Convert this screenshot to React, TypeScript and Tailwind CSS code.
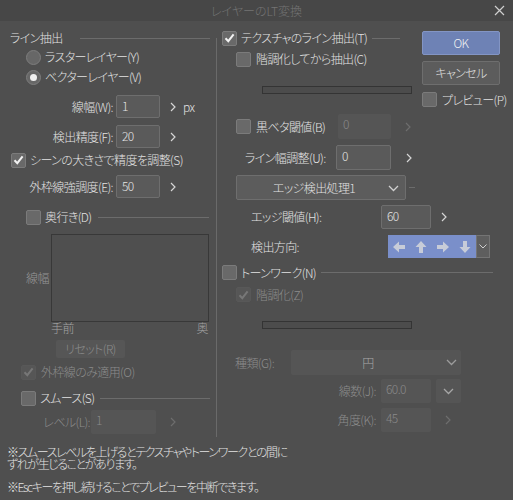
import React from "react";

const font = "font-['Noto_Sans_CJK_JP',sans-serif] [font-feature-settings:'palt']";

function Check({ checked = false, disabled = false }: { checked?: boolean; disabled?: boolean }) {
  return (
    <span
      className={`flex h-[15px] w-[15px] shrink-0 items-center justify-center rounded-[2px] border ${
        disabled ? "border-[#585858] bg-[#565656]" : "border-[#7b7b7b] bg-[#696969]"
      }`}
    >
      {checked && (
        <svg width="11" height="10" viewBox="0 0 11 10">
          <path d="M1.5 5.2 L4.3 8.2 L9.6 1.4" fill="none" stroke={disabled ? "#777" : "#f2f2f2"} strokeWidth="2" />
        </svg>
      )}
    </span>
  );
}

function Radio({ on = false }: { on?: boolean }) {
  return (
    <span className="flex h-[15px] w-[15px] shrink-0 items-center justify-center rounded-full border border-[#7d7d7d] bg-[#676767]">
      {on && <span className="h-[7px] w-[7px] rounded-full bg-[#f0f0f0]" />}
    </span>
  );
}

function Chevron({ dim = false }: { dim?: boolean }) {
  return (
    <svg width="6" height="10" viewBox="0 0 6 10" className="shrink-0">
      <path d="M1 1 L5 5 L1 9" fill="none" stroke={dim ? "#6e6e6e" : "#d6d6d6"} strokeWidth="1.2" />
    </svg>
  );
}

function Down({ color = "#d0d0d0" }: { color?: string }) {
  return (
    <svg width="11" height="7" viewBox="0 0 11 7">
      <path d="M1 1 L5.5 5.5 L10 1" fill="none" stroke={color} strokeWidth="1.3" />
    </svg>
  );
}

function Field({ value, className, disabled = false }: { value: string; className: string; disabled?: boolean }) {
  return (
    <span
      className={`flex shrink-0 items-start rounded-[2px] pl-[5px] pt-[2px] text-[12px] leading-[16px] ${
        disabled ? "bg-[#555555] text-[#8a8a8a]" : "border border-[#6e6e6e] bg-[#5a5a5a] text-[#e4e4e4]"
      } ${className}`}
    >
      {value}
    </span>
  );
}

function DirArrow({ rot }: { rot: string }) {
  return (
    <span className="flex w-[22px] items-center justify-center">
      <svg width="12" height="12" viewBox="0 0 12 12" className={rot}>
        <polygon points="0,6 6,0.5 6,4 12,4 12,8 6,8 6,11.5" fill="#c7ccd8" />
      </svg>
    </span>
  );
}

export default function App() {
  return (
    <div className={`flex h-[500px] w-[513px] flex-col overflow-hidden bg-[#4f4f4f] text-[12px] font-light leading-[16px] text-[#e2e2e2] ${font}`}>
      {/* title */}
      <div className="relative flex h-[21px] shrink-0 items-center justify-center bg-[#474747] text-[#747474]">
        <span>レイヤーのLT変換</span>
        <svg width="11" height="11" viewBox="0 0 11 11" className="absolute right-[8px] top-[5px]">
          <path d="M1 1 L10 10 M10 1 L1 10" stroke="#cfcfcf" strokeWidth="1.2" />
        </svg>
      </div>

      <div className="flex h-[419px] shrink-0 tracking-[-0.6px]">
        {/* left column */}
        <div className="flex w-[216px] shrink-0 flex-col">
          <div className="mt-[9px] flex h-[16px] items-center pl-[10px] pr-[6px]">
            <span>ライン抽出</span>
            <span className="ml-[17px] h-px flex-1 bg-[#6c6c6c]" />
          </div>
          <div className="mt-[3px] flex h-[16px] items-center gap-[4px] pl-[26px]">
            <Radio />
            <span>ラスターレイヤー(Y)</span>
          </div>
          <div className="mt-[4px] flex h-[16px] items-center gap-[4px] pl-[26px]">
            <Radio on />
            <span>ベクターレイヤー(V)</span>
          </div>
          <div className="mt-[10px] flex h-[23px] items-center">
            <span className="w-[113px] text-right">線幅(W):</span>
            <Field value="1" className="ml-[3px] h-[23px] w-[44px]" />
            <span className="ml-[10px]"><Chevron /></span>
            <span className="ml-[7px]">px</span>
          </div>
          <div className="mt-[7px] flex h-[23px] items-center">
            <span className="w-[113px] text-right">検出精度(F):</span>
            <Field value="20" className="ml-[3px] h-[23px] w-[44px]" />
            <span className="ml-[10px]"><Chevron /></span>
          </div>
          <div className="mt-[4px] flex h-[16px] items-center gap-[4px] pl-[11px]">
            <Check checked />
            <span>シーンの大きさで精度を調整(S)</span>
          </div>
          <div className="mt-[7px] flex h-[23px] items-center">
            <span className="w-[113px] text-right">外枠線強調度(E):</span>
            <Field value="50" className="ml-[3px] h-[23px] w-[44px]" />
            <span className="ml-[10px]"><Chevron /></span>
          </div>
          <div className="mt-[11px] flex h-[16px] items-center pl-[26px] pr-[7px]">
            <Check />
            <span className="ml-[4px]">奥行き(D)</span>
            <span className="ml-[6px] h-px flex-1 bg-[#6c6c6c]" />
          </div>
          <div className="mt-[9px] flex h-[88px]">
            <span className="w-[51px] self-center pl-[26px] text-[#979797]">線幅</span>
            <div className="h-[88px] w-[158px] border border-[#383838]" />
          </div>
          <div className="flex h-[12px] w-[208px] items-center justify-between pl-[51px] leading-[12px] text-[#a2a2a2]">
            <span>手前</span>
            <span>奥</span>
          </div>
          <div className="ml-[56px] mt-[6px] flex h-[18px] w-[69px] items-center justify-center rounded-[2px] bg-[#565656] text-[#8c8c8c]">
            リセット(R)
          </div>
          <div className="mt-[6px] flex h-[16px] items-center pl-[21px]">
            <Check checked disabled />
            <span className="ml-[5px] text-[#8c8c8c]">外枠線のみ適用(O)</span>
          </div>
          <div className="mt-[10px] flex h-[16px] items-center pl-[21px] pr-[6px]">
            <Check />
            <span className="ml-[4px]">スムース(S)</span>
            <span className="ml-[6px] h-px flex-1 bg-[#6c6c6c]" />
          </div>
          <div className="mt-[4px] flex h-[24px] items-center">
            <span className="w-[90px] text-right text-[#8c8c8c]">レベル(L):</span>
            <Field value="1" disabled className="ml-[1px] h-[24px] w-[65px]" />
            <span className="ml-[14px]"><Chevron dim /></span>
          </div>
        </div>

        {/* separator */}
        <div className="mt-[17px] h-[399px] w-px shrink-0 bg-[#6a6a6a]" />

        {/* right column */}
        <div className="flex flex-1 flex-col">
          <div className="flex">
            <div className="flex w-[195px] flex-col">
              <div className="mt-[9px] flex h-[16px] items-center pl-[5px] pr-[12px]">
                <Check checked />
                <span className="ml-[4px] whitespace-nowrap">テクスチャのライン抽出(T)</span>
                <span className="ml-[5px] h-px flex-1 bg-[#6c6c6c]" />
              </div>
              <div className="mt-[5px] flex h-[16px] items-center pl-[19px]">
                <Check />
                <span className="ml-[5px]">階調化してから抽出(C)</span>
              </div>
              <div className="ml-[45px] mt-[19px] h-[8px] w-[150px] border border-[#343434] bg-[#4c4c4c]" />
            </div>
            <div className="ml-[10px] flex w-[78px] flex-col">
              <div className="mt-[10px] flex h-[24px] items-center justify-center rounded-[2px] border border-[#8395c4] bg-[#6e82b5] text-[#f2f2f2]">
                OK
              </div>
              <div className="mt-[6px] flex h-[24px] items-center justify-center rounded-[2px] border border-[#6e6e6e] bg-[#5c5c5c]">
                キャンセル
              </div>
              <div className="mt-[7px] flex h-[15px] items-center whitespace-nowrap">
                <Check />
                <span className="ml-[5px]">プレビュー(P)</span>
              </div>
            </div>
          </div>

          <div className="mt-[7px] flex h-[25px] items-center">
            <div className="flex w-[121px] items-center pl-[19px]">
              <Check />
              <span className="ml-[5px]">黒ベタ閾値(B)</span>
            </div>
            <Field value="0" disabled className="h-[25px] w-[53px]" />
            <span className="ml-[14px]"><Chevron dim /></span>
          </div>
          <div className="mt-[6px] flex h-[25px] items-center">
            <span className="w-[119px] pl-[28px]">ライン幅調整(U):</span>
            <Field value="0" className="h-[25px] w-[55px]" />
            <span className="ml-[15px]"><Chevron /></span>
          </div>
          <div className="mt-[5px] flex h-[25px] items-center">
            <div className="relative ml-[19px] flex h-[25px] w-[170px] items-center justify-center rounded-[2px] border border-[#6e6e6e] bg-[#5c5c5c]">
              <span className="-ml-[14px]">エッジ検出処理1</span>
              <span className="absolute right-[6px] top-[9px]"><Down /></span>
            </div>
            <span className="ml-[3px] h-px w-[6px] bg-[#6c6c6c]" />
          </div>
          <div className="mt-[5px] flex h-[24px] items-center">
            <span className="w-[164px] pl-[34px]">エッジ閾値(H):</span>
            <Field value="60" className="h-[24px] w-[50px]" />
            <span className="ml-[10px]"><Chevron /></span>
          </div>
          <div className="mt-[6px] flex h-[23px] items-center">
            <span className="w-[171px] pl-[34px]">検出方向:</span>
            <div className="flex h-[23px] w-[88px] items-center bg-[#7a8fca]">
              <DirArrow rot="" />
              <DirArrow rot="rotate-90" />
              <DirArrow rot="rotate-180" />
              <DirArrow rot="-rotate-90" />
            </div>
            <div className="flex h-[23px] w-[14px] items-center justify-center border border-[#747474] bg-[#5e5e5e]">
              <svg width="8" height="5" viewBox="0 0 8 5">
                <path d="M0.5 0.5 L4 4 L7.5 0.5" fill="none" stroke="#cfcfcf" strokeWidth="1" />
              </svg>
            </div>
          </div>
          <div className="mt-[7px] flex h-[15px] items-center pl-[5px] pr-[20px]">
            <Check />
            <span className="ml-[4px]">トーンワーク(N)</span>
            <span className="ml-[5px] h-px flex-1 bg-[#6c6c6c]" />
          </div>
          <div className="mt-[7px] flex h-[15px] items-center pl-[19px]">
            <Check checked disabled />
            <span className="ml-[5px] text-[#8c8c8c]">階調化(Z)</span>
          </div>
          <div className="ml-[45px] mt-[19px] h-[8px] w-[150px] border border-[#343434] bg-[#4c4c4c]" />
          <div className="mt-[21px] flex h-[25px] items-center text-[#8c8c8c]">
            <span className="w-[74px] pl-[18px]">種類(G):</span>
            <div className="relative flex h-[25px] w-[170px] items-center justify-center rounded-[2px] bg-[#555555] text-[#a8a8a8]">
              <span className="-ml-[16px]">円</span>
              <span className="absolute right-[4px] top-[9px]"><Down color="#9c9c9c" /></span>
            </div>
          </div>
          <div className="mt-[4px] flex h-[24px] items-center text-[#8c8c8c]">
            <span className="w-[159px] text-right">線数(J):</span>
            <Field value="60.0" disabled className="ml-[5px] h-[24px] w-[50px]" />
            <span className="ml-[5px] flex h-[24px] w-[25px] items-center justify-center rounded-[2px] bg-[#555555]">
              <Down color="#a6a6a6" />
            </span>
          </div>
          <div className="mt-[5px] flex h-[24px] items-center text-[#8c8c8c]">
            <span className="w-[159px] text-right">角度(K):</span>
            <Field value="45" disabled className="ml-[5px] h-[24px] w-[50px]" />
            <span className="ml-[14px]"><Chevron dim /></span>
          </div>
        </div>
      </div>

      {/* notes */}
      <div className="flex flex-col pl-[7px] text-[12px] leading-[12px] tracking-[-1.4px]">
        <p className="mt-[6px]">
          ※スムースレベルを上げるとテクスチャやトーンワークとの間に
          <br />
          ずれが生じることがあります。
        </p>
        <p className="mt-[11px]">※Escキーを押し続けることでプレビューを中断できます。</p>
      </div>
    </div>
  );
}
